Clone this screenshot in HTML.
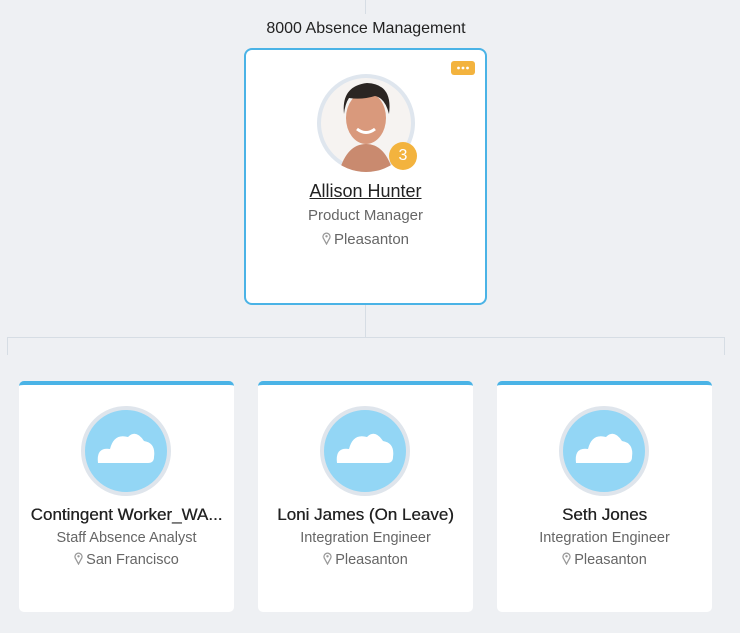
<!DOCTYPE html>
<html><head><style>
body{margin:0;width:740px;height:633px;background:#eef0f3;font-family:"Liberation Sans",sans-serif;position:relative;overflow:hidden}
.a{position:absolute}
.t{position:absolute;left:0;right:0;text-align:center;white-space:nowrap}
.card{position:absolute;background:#fff;border-radius:5px;top:381px;width:215px;height:231px;border-top:4px solid #4ab3e6;box-sizing:border-box}
.av{position:absolute;left:62px;top:21px;width:90px;height:90px;border-radius:50%;background:#93d6f5;border:4px solid #dfe5ec;box-sizing:border-box}
.nm{top:120px;font-size:17px;color:#222;text-shadow:0.3px 0 0 #222}
.jb{top:145px;font-size:14.5px;color:#666}
.lc{top:167px;font-size:14.5px;color:#666}
.pin{display:inline-block;vertical-align:-1px;margin-right:3px}
</style></head><body>
<div class="a" style="left:365px;top:0;width:1px;height:14px;background:#d6dde4"></div>
<div class="a" style="left:365px;top:305px;width:1px;height:32px;background:#d6dde4"></div>
<div class="a" style="left:7px;top:337px;width:718px;height:1px;background:#d6dde4"></div>
<div class="a" style="left:7px;top:337px;width:1px;height:18px;background:#d6dde4"></div>
<div class="a" style="left:724px;top:337px;width:1px;height:18px;background:#d6dde4"></div>
<div class="t" style="top:20px;left:0;width:732px;font-size:16px;color:#222">8000 Absence Management</div>
<div class="a" style="left:244px;top:48px;width:243px;height:257px;border:2px solid #4ab3e6;border-radius:8px;background:#fff;box-sizing:border-box">
 <div class="a" style="left:205px;top:11px;width:24px;height:14px;background:#f3b33e;border-radius:3px">
  <svg width="24" height="14"><circle cx="7.5" cy="7" r="1.4" fill="#fff"/><circle cx="12" cy="7" r="1.4" fill="#fff"/><circle cx="16.5" cy="7" r="1.4" fill="#fff"/></svg></div>
 <div class="a" style="left:71px;top:24px;width:98px;height:98px;border-radius:50%;background:#dfe6ee;overflow:hidden">
  <svg width="98" height="98" viewBox="0 0 98 98"><circle cx="49" cy="49" r="45" fill="#f6f3f1"/>
  <path d="M22 98 Q30 70 49 70 Q68 70 76 98Z" fill="#c98a6f"/>
  <ellipse cx="49" cy="44" rx="20" ry="26" fill="#d9997c"/>
  <path d="M27 40 Q24 12 50 9 Q76 10 72 40 Q68 24 58 22 Q45 26 32 24 Q28 30 27 40Z" fill="#2b2522"/>
  <path d="M40 55 Q49 62 58 55" stroke="#fff" stroke-width="3" fill="none"/></svg>
 </div>
 <div class="a" style="left:143px;top:92px;width:28px;height:28px;border-radius:50%;background:#f3b33e;color:#fff;font-size:16px;text-align:center;line-height:28px">3</div>
 <div class="t" style="top:131px;font-size:18px;color:#222;text-decoration:underline">Allison Hunter</div>
 <div class="t" style="top:157px;font-size:15px;color:#666">Product Manager</div>
 <div class="t" style="top:181px;font-size:15px;color:#666"><svg class="pin" width="9" height="13" viewBox="0 0 9 13"><path d="M4.5 12 L1.5 6.5 A3.5 3.5 0 1 1 7.5 6.5Z" fill="none" stroke="#999" stroke-width="1.3"/><circle cx="4.5" cy="4.3" r="1.2" fill="#999"/></svg>Pleasanton</div>
</div>
<svg width="0" height="0" style="position:absolute"><defs><g id="cl"><path d="M-28 12 Q-30 -4 -16 -2 Q-12 -18 2 -14 Q10 -22 18 -10 Q30 -8 28 6 Q28 12 22 12Z" fill="#fff"/></g>
<g id="pn"><path d="M4.5 12 L1.5 6.5 A3.5 3.5 0 1 1 7.5 6.5Z" fill="none" stroke="#999" stroke-width="1.3"/><circle cx="4.5" cy="4.3" r="1.2" fill="#999"/></g></defs></svg>
<div class="card" style="left:19px"><div class="av"><svg width="82" height="82" viewBox="-41 -41 82 82"><use href="#cl"/></svg></div>
<div class="t nm">Contingent Worker_WA...</div><div class="t jb">Staff Absence Analyst</div><div class="t lc"><svg class="pin" width="9" height="13"><use href="#pn"/></svg>San Francisco</div></div>
<div class="card" style="left:258px"><div class="av"><svg width="82" height="82" viewBox="-41 -41 82 82"><use href="#cl"/></svg></div>
<div class="t nm">Loni James (On Leave)</div><div class="t jb">Integration Engineer</div><div class="t lc"><svg class="pin" width="9" height="13"><use href="#pn"/></svg>Pleasanton</div></div>
<div class="card" style="left:497px"><div class="av"><svg width="82" height="82" viewBox="-41 -41 82 82"><use href="#cl"/></svg></div>
<div class="t nm">Seth Jones</div><div class="t jb">Integration Engineer</div><div class="t lc"><svg class="pin" width="9" height="13"><use href="#pn"/></svg>Pleasanton</div></div>
</body></html>
